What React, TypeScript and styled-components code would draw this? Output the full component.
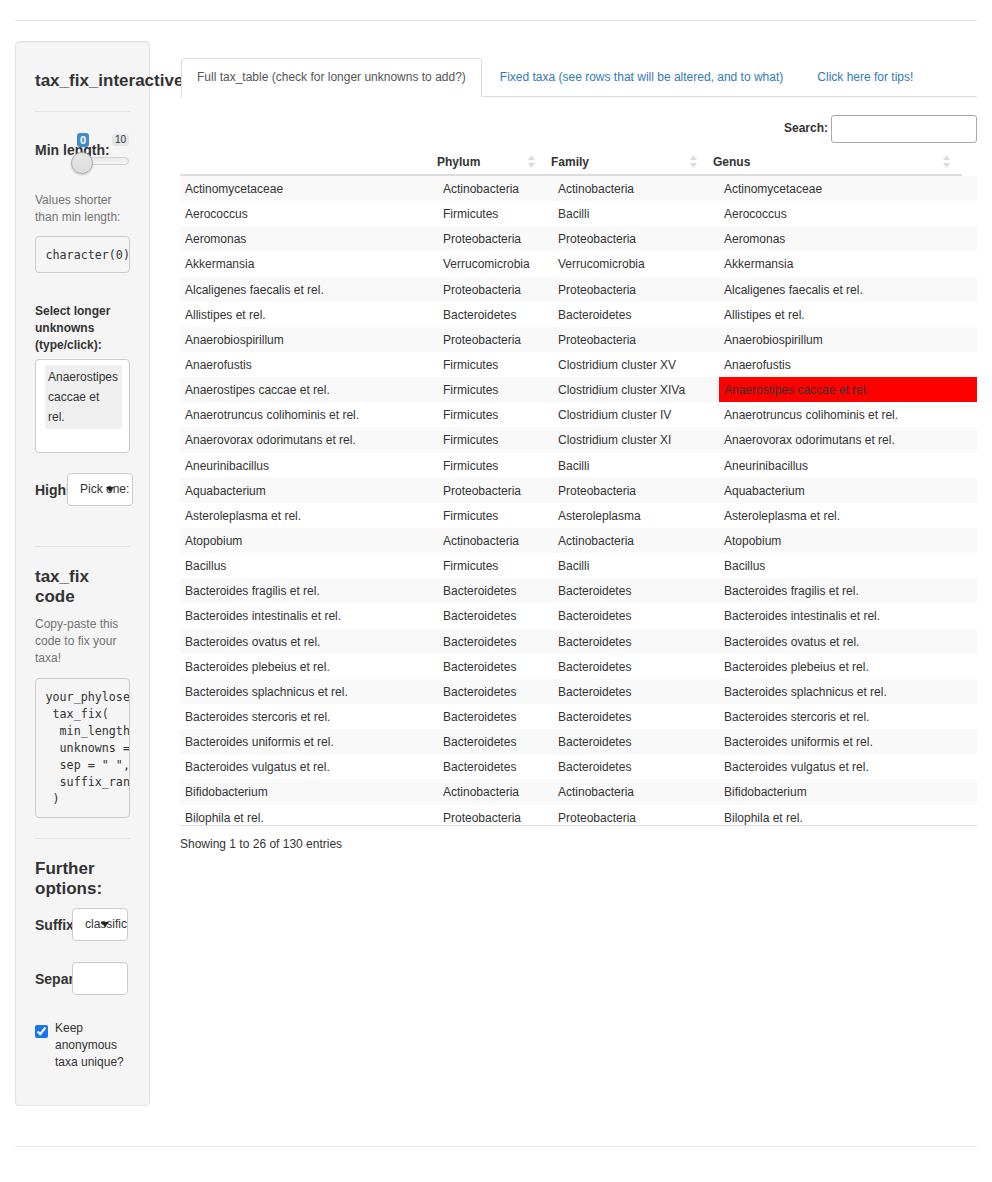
import styled, { createGlobalStyle } from "styled-components";

const GlobalStyle = createGlobalStyle`
  body {
    margin: 0;
    background: #fff;
    color: #333;
    font-family: "Liberation Sans", Arial, sans-serif;
    font-size: 12px;
    line-height: 1.42857;
  }
  * { box-sizing: border-box; }
`;

const Page = styled.div`
  padding: 0 15px;
`;

const PageRule = styled.div<{ $top: number }>`
  margin-top: ${(p) => p.$top}px;
  border-top: 1px solid #e6e6e6;
`;

const Row = styled.div`
  display: flex;
  align-items: flex-start;
  margin-top: 20px;
`;

/* ---------- sidebar ---------- */

const Well = styled.div`
  display: flex;
  flex-direction: column;
  width: 135px;
  flex: none;
  padding: 19px;
  background: #f5f5f5;
  border: 1px solid #e3e3e3;
  border-radius: 4px;
  box-shadow: inset 0 1px 1px rgba(0, 0, 0, 0.05);
`;

const SideTitle = styled.h4<{ $wrap?: boolean }>`
  margin: 10px 0 9px;
  font-size: 17px;
  font-weight: bold;
  line-height: 20px;
  white-space: ${(p) => (p.$wrap ? "normal" : "nowrap")};
`;

const Rule = styled.hr<{ $top: number; $bottom: number }>`
  width: 100%;
  margin: ${(p) => p.$top}px 0 ${(p) => p.$bottom}px;
  border: 0;
  border-top: 1px solid #e3e3e3;
`;

const SliderGroup = styled.div`
  position: relative;
  height: 52px;
  margin-bottom: 8px;
`;

const BigLabel = styled.label`
  display: block;
  font-size: 14px;
  font-weight: bold;
  line-height: 20px;
  white-space: nowrap;
`;

const SliderLabel = styled(BigLabel)`
  padding-top: 8px;
`;

const Badge = styled.span<{ $active?: boolean }>`
  position: absolute;
  top: ${(p) => (p.$active ? 1 : 2)}px;
  left: ${(p) => (p.$active ? 42 : 77)}px;
  padding: 0 3px;
  border-radius: 3px;
  font-size: ${(p) => (p.$active ? 11 : 10)}px;
  line-height: ${(p) => (p.$active ? 14 : 12)}px;
  font-weight: ${(p) => (p.$active ? "bold" : "normal")};
  color: ${(p) => (p.$active ? "#fff" : "#333")};
  background: ${(p) => (p.$active ? "#428bca" : "#e1e4e9")};
`;

const Track = styled.div`
  position: absolute;
  top: 25px;
  left: 44px;
  width: 50px;
  height: 8px;
  border: 1px solid #cfcfcf;
  border-radius: 4px;
  background: linear-gradient(#eaeaea, #f5f5f5);
`;

const Handle = styled.div`
  position: absolute;
  top: 20px;
  left: 36px;
  width: 22px;
  height: 22px;
  border-radius: 50%;
  border: 1px solid #ababab;
  background: linear-gradient(#e6e6e6, #dcdcdc);
  box-shadow: 0 1px 2px rgba(0, 0, 0, 0.2);
`;

const Hint = styled.p<{ $bottom: number }>`
  margin: 0 0 ${(p) => p.$bottom}px;
  color: #737373;
  font-size: 12px;
  line-height: 17px;
`;

const Verbatim = styled.pre<{ $lh: number; $bottom: number }>`
  margin: 0 0 ${(p) => p.$bottom}px;
  padding: 9.5px;
  border: 1px solid #ccc;
  border-radius: 4px;
  background: #f5f5f5;
  color: #333;
  font-family: "DejaVu Sans Mono", "Liberation Mono", monospace;
  font-size: 11.7px;
  line-height: ${(p) => p.$lh}px;
  white-space: pre;
  overflow: hidden;
`;

const SmallLabel = styled.label`
  display: block;
  margin-bottom: 5px;
  font-size: 12px;
  font-weight: bold;
  line-height: 17px;
`;

const SelectizeBox = styled.div`
  height: 94px;
  padding: 5px 8px 0 9px;
  background: #fff;
  border: 1px solid #ccc;
  border-radius: 4px;
  margin-bottom: 20px;
`;

const Chip = styled.div`
  width: 77px;
  padding: 2px 3px;
  background: #efefef;
  border-radius: 3px;
  font-size: 12px;
  line-height: 20px;
`;

const InlineField = styled.div<{ $top?: number }>`
  display: flex;
  align-items: center;
  margin-top: ${(p) => p.$top ?? 0}px;
`;

const InlineLabel = styled(BigLabel)`
  flex: 1;
  min-width: 0;
  overflow: hidden;
`;

const SelectBox = styled.div<{ $width: number; $right: number }>`
  position: relative;
  width: ${(p) => p.$width}px;
  height: 33px;
  flex: none;
  margin-right: ${(p) => p.$right}px;
  padding-left: 12px;
  background: #fff;
  border: 1px solid #ccc;
  border-radius: 4px;
  font-size: 12px;
  line-height: 31px;
  white-space: nowrap;
  overflow: hidden;
`;

const Caret = styled.span`
  position: absolute;
  right: 18px;
  top: 13px;
  border-left: 4px solid transparent;
  border-right: 4px solid transparent;
  border-top: 5px solid #222;
`;

const TextBox = styled.input`
  width: 56px;
  height: 33px;
  flex: none;
  margin: 0 2px 0 0;
  border: 1px solid #ccc;
  border-radius: 4px;
  background: #fff;
`;

const CheckRow = styled.label`
  display: flex;
  align-items: flex-start;
  gap: 7px;
  margin: 25px 0 15px;
  font-size: 12px;
  line-height: 17px;
`;

const Check = styled.input`
  width: 13px;
  height: 13px;
  margin: 5px 0 0;
  flex: none;
  accent-color: #1a74f0;
`;

/* ---------- main ---------- */

const Main = styled.div`
  flex: 1;
  min-width: 0;
  margin-left: 30px;
  padding-top: 17px;
`;

const Tabs = styled.ul`
  display: flex;
  margin: 0;
  padding: 0 0 0 1px;
  list-style: none;
  border-bottom: 1px solid #ddd;
`;

const Tab = styled.li<{ $active?: boolean }>`
  margin: 0 2px -1px 0;
  padding: 10px 15px;
  border: 1px solid ${(p) => (p.$active ? "#ddd" : "transparent")};
  border-bottom-color: ${(p) => (p.$active ? "#fff" : "transparent")};
  border-radius: 4px 4px 0 0;
  background: ${(p) => (p.$active ? "#fff" : "transparent")};
  color: ${(p) => (p.$active ? "#555" : "#337ab7")};
  font-size: 12px;
  line-height: 17px;
  white-space: nowrap;
`;

const SearchRow = styled.div`
  display: flex;
  justify-content: flex-end;
  align-items: center;
  gap: 3px;
  margin-top: 18px;
  font-weight: bold;
`;

const SearchInput = styled.input`
  width: 146px;
  height: 28px;
  margin: 0;
  border: 1px solid #aaa;
  border-radius: 3px;
  background: #fff;
`;

const HeadGrid = styled.div`
  display: grid;
  grid-template-columns: 253px 114px 162px 253px;
  width: 782px;
  margin-top: 7px;
  border-bottom: 2px solid #ddd;
`;

const HeadCell = styled.div`
  position: relative;
  padding: 4px 4px 3px;
  font-weight: bold;
  line-height: 17px;
`;

const SortIcon = styled.svg`
  position: absolute;
  right: 12px;
  top: 4px;
`;

const BodyScroll = styled.div`
  height: 650px;
  overflow: hidden;
  border-bottom: 1px solid #ddd;
`;

const BodyRow = styled.div<{ $odd: boolean }>`
  display: grid;
  grid-template-columns: 258px 115px 166px 258px;
  background: ${(p) => (p.$odd ? "#f9f9f9" : "#fff")};
`;

const Cell = styled.div<{ $hit?: boolean }>`
  padding: 5px 5px 3px;
  line-height: 17.142px;
  white-space: nowrap;
  background: ${(p) => (p.$hit ? "#ff0000" : "transparent")};
`;

const Info = styled.div`
  margin-top: 10px;
  line-height: 17px;
`;

const rows: [string, string, string][] = [
  ["Actinomycetaceae", "Actinobacteria", "Actinobacteria"],
  ["Aerococcus", "Firmicutes", "Bacilli"],
  ["Aeromonas", "Proteobacteria", "Proteobacteria"],
  ["Akkermansia", "Verrucomicrobia", "Verrucomicrobia"],
  ["Alcaligenes faecalis et rel.", "Proteobacteria", "Proteobacteria"],
  ["Allistipes et rel.", "Bacteroidetes", "Bacteroidetes"],
  ["Anaerobiospirillum", "Proteobacteria", "Proteobacteria"],
  ["Anaerofustis", "Firmicutes", "Clostridium cluster XV"],
  ["Anaerostipes caccae et rel.", "Firmicutes", "Clostridium cluster XIVa"],
  ["Anaerotruncus colihominis et rel.", "Firmicutes", "Clostridium cluster IV"],
  ["Anaerovorax odorimutans et rel.", "Firmicutes", "Clostridium cluster XI"],
  ["Aneurinibacillus", "Firmicutes", "Bacilli"],
  ["Aquabacterium", "Proteobacteria", "Proteobacteria"],
  ["Asteroleplasma et rel.", "Firmicutes", "Asteroleplasma"],
  ["Atopobium", "Actinobacteria", "Actinobacteria"],
  ["Bacillus", "Firmicutes", "Bacilli"],
  ["Bacteroides fragilis et rel.", "Bacteroidetes", "Bacteroidetes"],
  ["Bacteroides intestinalis et rel.", "Bacteroidetes", "Bacteroidetes"],
  ["Bacteroides ovatus et rel.", "Bacteroidetes", "Bacteroidetes"],
  ["Bacteroides plebeius et rel.", "Bacteroidetes", "Bacteroidetes"],
  ["Bacteroides splachnicus et rel.", "Bacteroidetes", "Bacteroidetes"],
  ["Bacteroides stercoris et rel.", "Bacteroidetes", "Bacteroidetes"],
  ["Bacteroides uniformis et rel.", "Bacteroidetes", "Bacteroidetes"],
  ["Bacteroides vulgatus et rel.", "Bacteroidetes", "Bacteroidetes"],
  ["Bifidobacterium", "Actinobacteria", "Actinobacteria"],
  ["Bilophila et rel.", "Proteobacteria", "Proteobacteria"],
];

const highlighted = "Anaerostipes caccae et rel.";

const code = `your_phyloseq %>%
 tax_fix(
  min_length = 0,
  unknowns = c("Anaerostipes caccae et rel."),
  sep = " ", anon_unique = TRUE,
  suffix_rank = "classification"
 )`;

const Sort = () => (
  <SortIcon width="7" height="15" viewBox="0 0 7 15">
    <path d="M3.5 1 L7 6 L0 6 Z" fill="#dcdcdc" />
    <path d="M0 9 L7 9 L3.5 14 Z" fill="#dcdcdc" />
  </SortIcon>
);

const Sidebar = () => (
  <Well>
    <SideTitle>tax_fix_interactive</SideTitle>
    <Rule $top={11} $bottom={20} />
    <SliderGroup>
      <SliderLabel>Min length:</SliderLabel>
      <Track />
      <Handle />
      <Badge $active>0</Badge>
      <Badge>10</Badge>
    </SliderGroup>
    <Hint $bottom={10}>Values shorter than min length:</Hint>
    <Verbatim $lh={16} $bottom={30}>character(0)</Verbatim>
    <SmallLabel>Select longer unknowns (type/click):</SmallLabel>
    <SelectizeBox>
      <Chip>Anaerostipes caccae et rel.</Chip>
    </SelectizeBox>
    <InlineField>
      <InlineLabel>Highlight:</InlineLabel>
      <SelectBox $width={66} $right={-3}>
        Pick one:
        <Caret />
      </SelectBox>
    </InlineField>
    <Rule $top={40} $bottom={10} />
    <SideTitle $wrap>tax_fix code</SideTitle>
    <Hint $bottom={11}>Copy-paste this code to fix your taxa!</Hint>
    <Verbatim $lh={17} $bottom={0}>{code}</Verbatim>
    <Rule $top={20} $bottom={10} />
    <SideTitle $wrap>Further options:</SideTitle>
    <InlineField>
      <InlineLabel>Suffix rank:</InlineLabel>
      <SelectBox $width={56} $right={2}>
        classification
        <Caret />
      </SelectBox>
    </InlineField>
    <InlineField $top={21}>
      <InlineLabel>Separator:</InlineLabel>
      <TextBox type="text" />
    </InlineField>
    <CheckRow>
      <Check type="checkbox" defaultChecked />
      <span>Keep anonymous taxa unique?</span>
    </CheckRow>
  </Well>
);

const TaxTable = () => (
  <>
    <SearchRow>
      Search:
      <SearchInput type="search" />
    </SearchRow>
    <HeadGrid>
      <HeadCell />
      <HeadCell>
        Phylum
        <Sort />
      </HeadCell>
      <HeadCell>
        Family
        <Sort />
      </HeadCell>
      <HeadCell>
        Genus
        <Sort />
      </HeadCell>
    </HeadGrid>
    <BodyScroll>
      {rows.map(([name, phylum, family], i) => (
        <BodyRow key={name} $odd={i % 2 === 0}>
          <Cell>{name}</Cell>
          <Cell>{phylum}</Cell>
          <Cell>{family}</Cell>
          <Cell $hit={name === highlighted}>{name}</Cell>
        </BodyRow>
      ))}
    </BodyScroll>
    <Info>Showing 1 to 26 of 130 entries</Info>
  </>
);

const App = () => (
  <Page>
    <GlobalStyle />
    <PageRule $top={20} />
    <Row>
      <Sidebar />
      <Main>
        <Tabs>
          <Tab $active>Full tax_table (check for longer unknowns to add?)</Tab>
          <Tab>Fixed taxa (see rows that will be altered, and to what)</Tab>
          <Tab>Click here for tips!</Tab>
        </Tabs>
        <TaxTable />
      </Main>
    </Row>
    <PageRule $top={40} />
  </Page>
);

export default App;
